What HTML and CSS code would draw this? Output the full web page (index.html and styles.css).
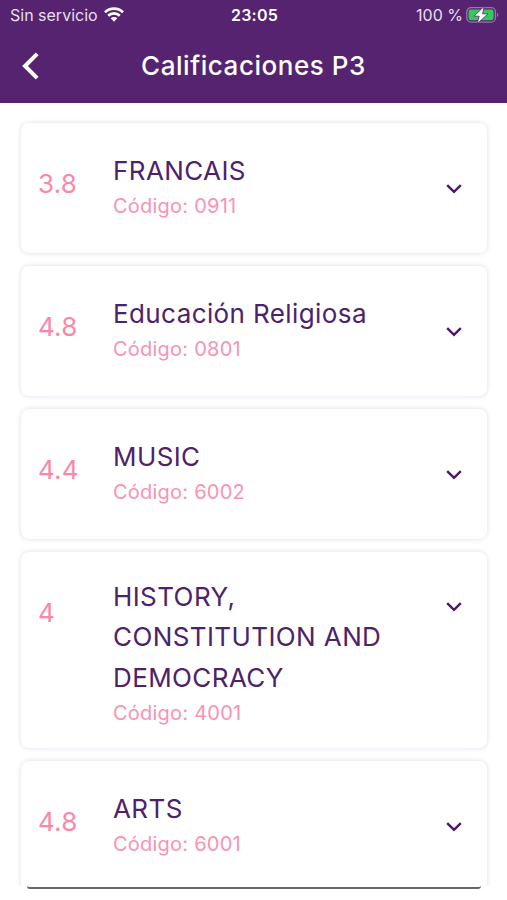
FILE: index.html
```html
<!DOCTYPE html>
<html lang="es">
<head>
    <meta charset="UTF-8">
    <meta name="viewport" content="width=device-width, initial-scale=1.0">
    <title>Calificaciones P3</title>
    <link rel="stylesheet" href="styles.css">
</head>
<body>
    <svg class="sprite">
        <symbol id="chevron" viewBox="0 0 16 10">
            <path d="M1.2 1.2 8 7.9l6.8-6.7" fill="none" stroke="currentColor" stroke-width="2.4"/>
        </symbol>
    </svg>

    <!-- Header -->
    <header>
        <div class="status-bar">
            <div class="carrier">
                <span class="carrier-name">Sin servicio</span>
                <svg class="wifi" width="20" height="15" viewBox="0 0 20 15">
                    <g fill="none" stroke="#fff" stroke-width="2.7">
                        <path d="M1 5.4a12.8 12.8 0 0 1 18 0"/>
                        <path d="M4.2 8.8a8.2 8.2 0 0 1 11.6 0"/>
                    </g>
                    <path d="M6.7 11.3a4.7 4.7 0 0 1 6.6 0L10 14.7z" fill="#fff"/>
                </svg>
            </div>
            <span class="time">23:05</span>
            <div class="power">
                <span class="percent">100 %</span>
                <svg class="battery" width="33" height="18" viewBox="0 0 33 18">
                    <rect x="0.8" y="1.7" width="28.6" height="14.4" rx="4.2" fill="none" stroke="#9579a8" stroke-width="1.3"/>
                    <path d="M31 6.7c1.7.8 1.7 3.6 0 4.4z" fill="#9579a8"/>
                    <rect x="2.6" y="3.5" width="25" height="10.8" rx="2.4" fill="#35c759"/>
                    <path d="M18.2.3 8 10.2h5.2l-2 7.6L22 7.8h-5.4z" fill="#fff" stroke="#552370" stroke-width="0.8"/>
                </svg>
            </div>
        </div>
        <div class="nav-bar">
            <svg class="back" width="18" height="28" viewBox="0 0 18 28">
                <path d="M16.2 1.8 4 14l12.2 12.2" fill="none" stroke="#fff" stroke-width="4"/>
            </svg>
            <h1>Calificaciones P3</h1>
        </div>
    </header>

    <!-- Grades -->
    <main>
        <div class="card">
            <span class="grade">3.8</span>
            <div class="subject">
                <h2>FRANCAIS</h2>
                <p>Código: 0911</p>
            </div>
            <svg class="chevron"><use href="#chevron"/></svg>
        </div>
        <div class="card">
            <span class="grade">4.8</span>
            <div class="subject">
                <h2>Educación Religiosa</h2>
                <p>Código: 0801</p>
            </div>
            <svg class="chevron"><use href="#chevron"/></svg>
        </div>
        <div class="card">
            <span class="grade">4.4</span>
            <div class="subject">
                <h2>MUSIC</h2>
                <p>Código: 6002</p>
            </div>
            <svg class="chevron"><use href="#chevron"/></svg>
        </div>
        <div class="card tall">
            <span class="grade">4</span>
            <div class="subject">
                <h2>HISTORY, CONSTITUTION AND DEMOCRACY</h2>
                <p>Código: 4001</p>
            </div>
            <svg class="chevron"><use href="#chevron"/></svg>
        </div>
        <div class="card">
            <span class="grade">4.8</span>
            <div class="subject">
                <h2>ARTS</h2>
                <p>Código: 6001</p>
            </div>
            <svg class="chevron"><use href="#chevron"/></svg>
        </div>
    </main>
    <div class="bottom-line"></div>
</body>
</html>
```

FILE: styles.css
```css
/* General Styling */
* {
    box-sizing: border-box;
}
body {
    font-family: Inter, "Liberation Sans", sans-serif;
    margin: 0;
    height: 900px;
    overflow: hidden;
    background-color: #fff;
}
h1, h2, p {
    margin: 0;
}
.sprite {
    display: none;
}

/* Header */
header {
    height: 103px;
    background-color: #552370;
    color: #fff;
}
.status-bar {
    display: grid;
    grid-template-columns: 1fr auto 1fr;
    align-items: center;
    height: 29px;
    padding: 0 8px 0 10px;
    font-size: 16px;
}
.carrier, .power {
    display: flex;
    align-items: center;
    color: #e9dff0;
}
.carrier {
    gap: 6px;
}
.power {
    justify-content: flex-end;
    gap: 3px;
}
.time {
    font-weight: 600;
    letter-spacing: 0.2px;
}
.nav-bar {
    display: flex;
    align-items: center;
    height: 73px;
    padding: 0 21px;
}
h1 {
    flex: 1;
    margin-right: 18px;
    text-align: center;
    font-size: 26px;
    font-weight: 500;
    letter-spacing: 0.55px;
}

/* Grades */
main {
    display: flex;
    flex-direction: column;
    gap: 13px;
    height: 783px;
    padding: 20px 20px 0 21px;
    overflow: hidden;
}
.card {
    display: flex;
    flex-shrink: 0;
    align-items: flex-start;
    height: 130px;
    padding: 28px 25px 0 17px;
    border-radius: 8px;
    background-color: #fff;
    box-shadow: 0 0 4px 1px #e3e8ee;
}
.grade {
    width: 75px;
    margin-top: 13px;
    font-size: 26px;
    line-height: 40px;
    letter-spacing: 0.2px;
    color: #fa87aa;
}
.subject {
    width: 290px;
}
h2 {
    font-size: 26px;
    font-weight: 400;
    line-height: 40.3px;
    letter-spacing: 0.4px;
    color: #4d226b;
}
.subject p {
    font-size: 20px;
    line-height: 30px;
    letter-spacing: 0.23px;
    color: #fa93b2;
}
.chevron {
    width: 16px;
    height: 10px;
    margin: 33px 0 0 auto;
    color: #4d1767;
}
.tall {
    height: 196px;
    padding-top: 25px;
}
.tall .grade {
    margin-top: 16px;
}
.tall .chevron {
    margin-top: 25px;
}

.bottom-line {
    height: 3px;
    margin: 0 26px 0 27px;
    border-bottom: 2px solid #666;
    border-radius: 0 0 8px 8px;
}
```
